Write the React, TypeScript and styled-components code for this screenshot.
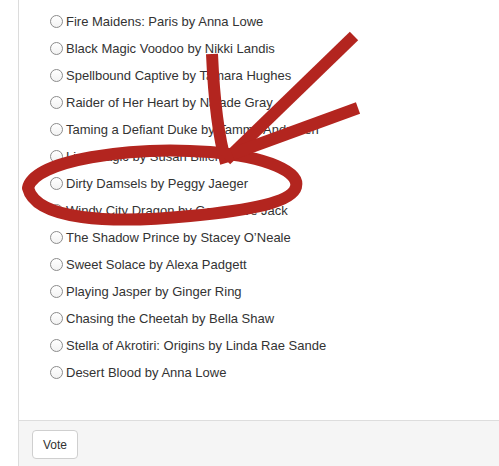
import styled, { createGlobalStyle } from 'styled-components'

const GlobalStyle = createGlobalStyle`
  html, body {
    margin: 0;
    padding: 0;
    background: #fff;
    overflow: hidden;
  }
  body {
    font-family: "Liberation Sans", Arial, Helvetica, sans-serif;
    color: #333;
  }
`

const Page = styled.div`
  position: relative;
  width: 499px;
  height: 466px;
  overflow: hidden;
`

const Panel = styled.div`
  margin-left: 18px;
  border-left: 1px solid #dcdcdc;
  display: flex;
  flex-direction: column;
  background: #fff;
`

const PanelBody = styled.div`
  padding: 8px 0 34px 31px;
`

const OptionList = styled.ul`
  list-style: none;
  margin: 0;
  padding: 0;
`

const OptionRow = styled.li`
  height: 27px;
  display: flex;
  align-items: center;
  font-size: 13px;
  color: #333;
`

const Radio = styled.span`
  width: 11px;
  height: 11px;
  border-radius: 50%;
  border: 1px solid #8c8c8c;
  background: linear-gradient(#fff, #f2f2f2);
  margin-right: 3px;
  flex-shrink: 0;
`

const PanelFooter = styled.div`
  background: #f5f5f5;
  border-top: 1px solid #dddddd;
  padding: 9px 13px 20px;
`

const VoteButton = styled.button`
  font-family: "Liberation Sans", Arial, sans-serif;
  font-size: 12px;
  color: #333;
  background: #fff;
  border: 1px solid #cfcfcf;
  border-radius: 4px;
  height: 29px;
  padding: 0 10px;
  width: 46px;
`

const Scribble = styled.svg`
  position: absolute;
  left: 0;
  top: 0;
  pointer-events: none;
`

const books = [
  'Fire Maidens: Paris by Anna Lowe',
  'Black Magic Voodoo by Nikki Landis',
  'Spellbound Captive by Tamara Hughes',
  'Raider of Her Heart by Nalade Gray',
  'Taming a Defiant Duke by Tammy Andresen',
  'Lion Magic by Susan Bliler',
  'Dirty Damsels by Peggy Jaeger',
  'Windy City Dragon by Genevieve Jack',
  'The Shadow Prince by Stacey O\u2019Neale',
  'Sweet Solace by Alexa Padgett',
  'Playing Jasper by Ginger Ring',
  'Chasing the Cheetah by Bella Shaw',
  'Stella of Akrotiri: Origins by Linda Rae Sande',
  'Desert Blood by Anna Lowe',
]

export default function App() {
  return (
    <Page>
      <GlobalStyle />
      <Panel>
        <PanelBody>
          <OptionList>
            {books.map((b) => (
              <OptionRow key={b}>
                <Radio />
                {b}
              </OptionRow>
            ))}
          </OptionList>
        </PanelBody>
        <PanelFooter>
          <VoteButton>Vote</VoteButton>
        </PanelFooter>
      </Panel>
      <Scribble width="499" height="466" viewBox="0 0 499 466">
        <g
          fill="none"
          stroke="#b3251f"
          strokeWidth="12"
          strokeLinecap="butt"
          strokeLinejoin="round"
        >
          {/* hand-drawn loop round the highlighted entry */}
          <path d="M28 188 C34 160 130 146 210 152 C268 157 300 172 296 187 C292 202 252 210 190 216 C110 224 36 220 28 188 Z" />
          <path d="M212 54 C214 100 218 135 226 163" />
          <path d="M354 36 L226 160" />
          <path d="M358 108 L232 154" />
        </g>
      </Scribble>
    </Page>
  )
}
